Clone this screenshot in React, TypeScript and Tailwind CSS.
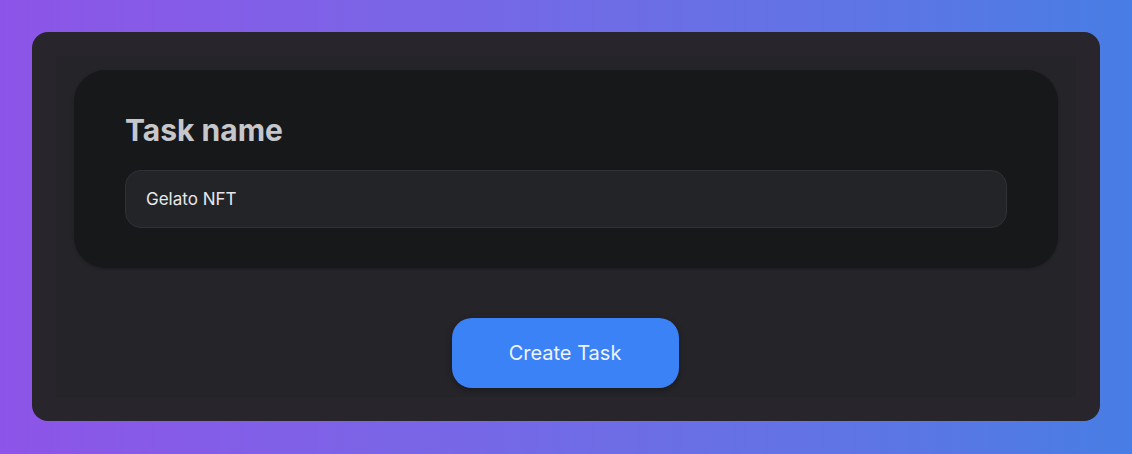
import React from "react";

export default function App() {
  return (
    <div className="min-h-[454px] w-full bg-gradient-to-r from-[#8d54e8] to-[#477de4] p-8 font-['Inter',sans-serif]">
      <div className="h-[389px] rounded-2xl bg-[#28262c] p-6">
        <div className="flex h-full flex-col bg-[#252429] px-[18px] pt-[14px]">
          <div className="rounded-[32px] bg-[#17181a] px-[51px] pb-10 pt-[42px] shadow-[0_1px_3px_rgba(0,0,0,0.25)]">
            <h2 className="text-[30px] font-bold leading-[36px] text-[#c6c7cb]">Task name</h2>
            <input
              className="mt-[22px] h-[58px] w-full rounded-2xl border border-[#303136] bg-[#232428] px-5 text-[17px] text-[#e8e8ea] outline-none"
              defaultValue="Gelato NFT"
            />
          </div>
          <div className="mt-[50px] flex justify-center">
            <button className="-ml-0.5 h-[70px] w-[227px] rounded-[20px] bg-[#3b82f6] text-xl text-[#eef3fe] shadow-[0_2px_6px_rgba(0,0,0,0.3)]">
              Create Task
            </button>
          </div>
        </div>
      </div>
    </div>
  );
}
